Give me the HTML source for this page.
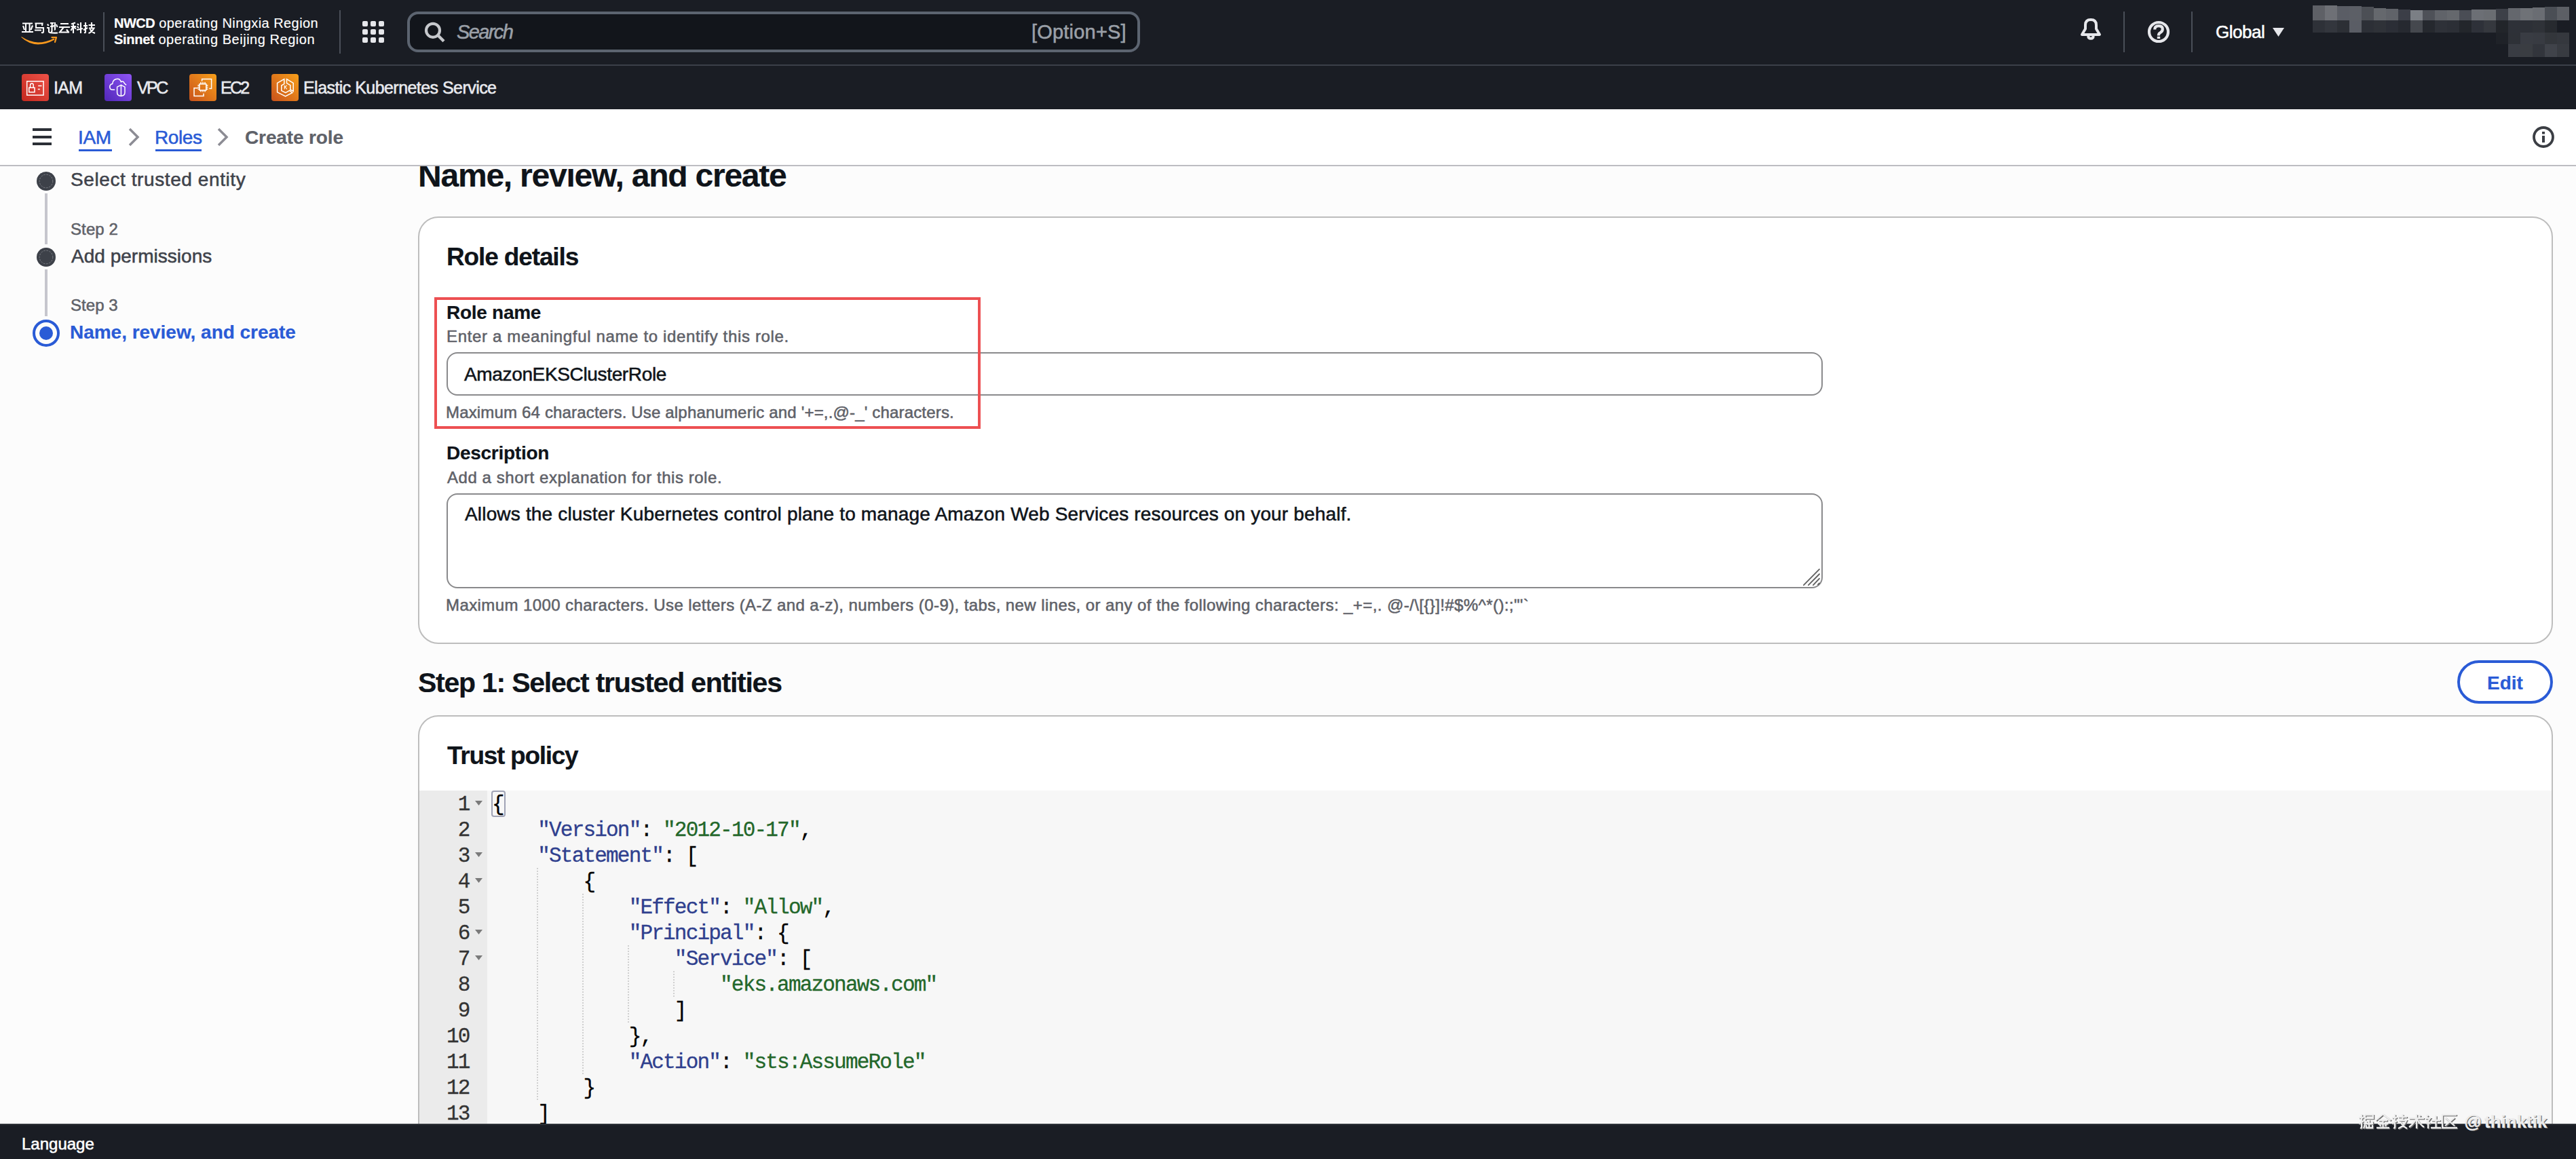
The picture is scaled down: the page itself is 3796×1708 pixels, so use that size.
<!DOCTYPE html>
<html><head><meta charset="utf-8">
<style>
*{box-sizing:border-box;margin:0;padding:0}
html,body{width:3796px;height:1708px;overflow:hidden;background:#fcfcfc;font-family:"Liberation Sans",sans-serif}
.a{position:absolute}
.t{position:absolute;white-space:pre;line-height:1;font-family:"Liberation Sans",sans-serif}
.t{-webkit-text-stroke-width:0.55px}
.b{font-weight:700;-webkit-text-stroke-width:0.2px}
.m{position:absolute;white-space:pre;line-height:1;font-family:"Liberation Mono",monospace;font-size:31px;letter-spacing:-1.8px;-webkit-text-stroke-width:0.3px}
.k{color:#2f3f8e}.s{color:#23672a}.p{color:#000}
</style></head><body>

<!-- ===== TOP NAV ===== -->
<div class="a" id="topnav" style="left:0;top:0;width:3796px;height:161px;background:#1a1d24;z-index:5">
  <!-- logo -->
  <svg class="a" style="left:28px;top:28px" width="120" height="42" viewBox="0 0 120 42">
    <g fill="none" stroke="#fff" stroke-width="2.1" stroke-linecap="butt" stroke-linejoin="miter">
      <path d="M5 6.5H20M10 7V19M15.6 7V19M6 10L8 16M20 9.5L17.5 16M4 19H21"/>
      <path d="M23.5 6.5H34.5L34 10M25 7V13H36V19Q36 20.5 33 20M23 16.5H33"/>
      <path d="M42 7.5L43.5 10M41 13H44V19Q45 21 57 20.5M46 6H50L48 9M46 11H50.5M48.5 9V18Q48.5 19 47 18.5M53 5V15Q53 16 52 15.5M51 9L50 12M55 8L56.5 12"/>
      <path d="M61 7H73M59 12H75M66 12L60 19.5H74M70 15.5L73.5 20"/>
      <path d="M77 7.5L83 5.5M76.5 11H84M80 6V21M80 11L76.5 17M81 12L84 14.5M86 7L88 9M85.5 11L88 13M85 16L94 14M91 5V21"/>
      <path d="M95 10H101M98 5V19Q98 20.5 96 20M95 16L101 13M102.5 9H112M107 5V13M103 13.5H110.5Q107.5 19 102.5 21M104.5 15Q107.5 19.5 112 21"/>
    </g>
    <path d="M3.5 26Q16 34 28 34.5Q40 34.5 51.5 28.5L52.5 30.5Q40 37.5 28 37.5Q14 37 3.5 27Z" fill="#f7981d"/>
    <path d="M48.5 27.2H55L53 34" fill="none" stroke="#f7981d" stroke-width="2.2" stroke-linejoin="round" stroke-linecap="round"/>
  </svg>
  <div class="a" style="left:152px;top:18px;width:2px;height:58px;background:#4a4f58"></div>
  <div class="t" style="left:168px;top:24px;font-size:20px;color:#fff;-webkit-text-stroke-width:0.15px;letter-spacing:0.43px"><span class="b" style="letter-spacing:-0.5px">NWCD</span> operating Ningxia Region</div>
  <div class="t" style="left:168px;top:48px;font-size:20px;color:#fff;-webkit-text-stroke-width:0.15px;letter-spacing:0.53px"><span class="b" style="letter-spacing:-0.3px">Sinnet</span> operating Beijing Region</div>
  <div class="a" style="left:500px;top:15px;width:2px;height:64px;background:#4a4f58"></div>
  <!-- grid icon -->
  <svg class="a" style="left:534px;top:31px" width="32" height="32" viewBox="0 0 32 32" fill="#e6e7eb">
    <rect x="0" y="0" width="8" height="8" rx="2"/><rect x="12" y="0" width="8" height="8" rx="2"/><rect x="24" y="0" width="8" height="8" rx="2"/>
    <rect x="0" y="12" width="8" height="8" rx="2"/><rect x="12" y="12" width="8" height="8" rx="2"/><rect x="24" y="12" width="8" height="8" rx="2"/>
    <rect x="0" y="24" width="8" height="8" rx="2"/><rect x="12" y="24" width="8" height="8" rx="2"/><rect x="24" y="24" width="8" height="8" rx="2"/>
  </svg>
  <!-- search -->
  <div class="a" style="left:600px;top:17px;width:1080px;height:60px;border:4px solid #5c6470;border-radius:16px;background:#12151b"></div>
  <svg class="a" style="left:623px;top:30px" width="34" height="34" viewBox="0 0 34 34"><circle cx="15" cy="14.8" r="10" fill="none" stroke="#c6c8cc" stroke-width="4.2"/><path d="M22 21.8L31 30.8" stroke="#c6c8cc" stroke-width="4.4"/></svg>
  <div class="t" style="left:673px;top:33px;font-size:29px;font-style:italic;color:#9ba0a8;letter-spacing:-1.6px">Search</div>
  <div class="t" style="left:1520px;top:33px;font-size:29px;color:#9ba0a8;letter-spacing:0.2px">[Option+S]</div>
  <!-- bell -->
  <svg class="a" style="left:3064px;top:26px" width="34" height="34" viewBox="0 0 34 34" fill="none" stroke="#e6e7eb" stroke-width="4" stroke-linejoin="round">
    <path d="M9 16.5V11Q9 3.1 17 3.1Q25 3.1 25 11V16.5L30 24.9H4Z"/><path d="M13.3 27Q13.3 30.8 17 30.8Q20.7 30.8 20.7 27"/>
  </svg>
  <div class="a" style="left:3129px;top:17px;width:2px;height:60px;background:#4a4f58"></div>
  <svg class="a" style="left:3163px;top:29px" width="36" height="36" viewBox="0 0 36 36" fill="none" stroke="#e6e7eb" stroke-width="4.2">
    <circle cx="18" cy="18" r="14"/><path d="M12.2 14.6Q12.2 9.2 18 9.2Q23.8 9.2 23.8 14Q23.8 17.2 20.3 19.2Q18 20.5 18 22.6V23.5"/>
    <rect x="15.8" y="24.8" width="4.4" height="3.2" fill="#e6e7eb" stroke="none"/>
  </svg>
  <div class="a" style="left:3229px;top:17px;width:2px;height:60px;background:#4a4f58"></div>
  <div class="t" style="left:3265px;top:34px;font-size:26px;color:#fff;letter-spacing:-0.47px">Global</div>
  <svg class="a" style="left:3349px;top:41px" width="17" height="13" viewBox="0 0 17 13"><path d="M0 0H17L8.5 13Z" fill="#e6e7eb"/></svg>
  <!-- mosaic -->
  <div id="mosaic">
<div class="a" style="left:3408px;top:8px;width:18px;height:22px;background:#5e6066"></div>
<div class="a" style="left:3426px;top:8px;width:18px;height:22px;background:#6e7076"></div>
<div class="a" style="left:3444px;top:9px;width:18px;height:21px;background:#5a5d65"></div>
<div class="a" style="left:3462px;top:9px;width:18px;height:21px;background:#5c5f66"></div>
<div class="a" style="left:3480px;top:10px;width:18px;height:20px;background:#4c4f55"></div>
<div class="a" style="left:3498px;top:12px;width:18px;height:18px;background:#65686d"></div>
<div class="a" style="left:3516px;top:13px;width:18px;height:17px;background:#606369"></div>
<div class="a" style="left:3534px;top:14px;width:18px;height:16px;background:#3b3e47"></div>
<div class="a" style="left:3552px;top:15px;width:18px;height:15px;background:#7b7f85"></div>
<div class="a" style="left:3570px;top:15px;width:18px;height:15px;background:#4e5158"></div>
<div class="a" style="left:3588px;top:15px;width:18px;height:15px;background:#606369"></div>
<div class="a" style="left:3606px;top:15px;width:18px;height:15px;background:#65686d"></div>
<div class="a" style="left:3624px;top:15px;width:18px;height:15px;background:#4a4d55"></div>
<div class="a" style="left:3642px;top:14px;width:18px;height:16px;background:#6c6f75"></div>
<div class="a" style="left:3660px;top:14px;width:18px;height:16px;background:#6a6d72"></div>
<div class="a" style="left:3678px;top:13px;width:18px;height:17px;background:#3d4048"></div>
<div class="a" style="left:3696px;top:12px;width:18px;height:18px;background:#64676d"></div>
<div class="a" style="left:3714px;top:12px;width:18px;height:18px;background:#6f7277"></div>
<div class="a" style="left:3732px;top:11px;width:18px;height:19px;background:#6a6d73"></div>
<div class="a" style="left:3750px;top:10px;width:18px;height:20px;background:#4a4e55"></div>
<div class="a" style="left:3768px;top:10px;width:18px;height:20px;background:#5c5f65"></div>
<div class="a" style="left:3408px;top:30px;width:18px;height:18px;background:#2e3138"></div>
<div class="a" style="left:3426px;top:30px;width:18px;height:18px;background:#33363d"></div>
<div class="a" style="left:3444px;top:30px;width:18px;height:18px;background:#2c2f35"></div>
<div class="a" style="left:3462px;top:30px;width:18px;height:18px;background:#5a5d65"></div>
<div class="a" style="left:3480px;top:30px;width:18px;height:18px;background:#2c2f36"></div>
<div class="a" style="left:3498px;top:30px;width:18px;height:18px;background:#2f3238"></div>
<div class="a" style="left:3516px;top:30px;width:18px;height:18px;background:#2b2e36"></div>
<div class="a" style="left:3534px;top:30px;width:18px;height:18px;background:#262930"></div>
<div class="a" style="left:3552px;top:30px;width:18px;height:18px;background:#45484e"></div>
<div class="a" style="left:3570px;top:30px;width:18px;height:18px;background:#25282e"></div>
<div class="a" style="left:3588px;top:30px;width:18px;height:18px;background:#2e3138"></div>
<div class="a" style="left:3606px;top:30px;width:18px;height:18px;background:#2c2f36"></div>
<div class="a" style="left:3624px;top:30px;width:18px;height:18px;background:#23262b"></div>
<div class="a" style="left:3642px;top:30px;width:18px;height:18px;background:#2e3139"></div>
<div class="a" style="left:3660px;top:30px;width:18px;height:18px;background:#35383e"></div>
<div class="a" style="left:3678px;top:30px;width:18px;height:18px;background:#22252a"></div>
<div class="a" style="left:3696px;top:30px;width:18px;height:18px;background:#2e3138"></div>
<div class="a" style="left:3714px;top:30px;width:18px;height:18px;background:#2d3037"></div>
<div class="a" style="left:3732px;top:30px;width:18px;height:18px;background:#2f3238"></div>
<div class="a" style="left:3750px;top:30px;width:18px;height:18px;background:#272a2f"></div>
<div class="a" style="left:3678px;top:48px;width:18px;height:17px;background:#1f2228"></div>
<div class="a" style="left:3696px;top:48px;width:18px;height:17px;background:#2e3137"></div>
<div class="a" style="left:3714px;top:48px;width:18px;height:17px;background:#393c43"></div>
<div class="a" style="left:3732px;top:48px;width:18px;height:17px;background:#383b42"></div>
<div class="a" style="left:3750px;top:48px;width:18px;height:17px;background:#33363b"></div>
<div class="a" style="left:3768px;top:48px;width:18px;height:17px;background:#35383e"></div>

<div class="a" style="left:3696px;top:65px;width:18px;height:19px;background:#393c43"></div>
<div class="a" style="left:3714px;top:65px;width:18px;height:19px;background:#3a3d42"></div>
<div class="a" style="left:3732px;top:65px;width:18px;height:19px;background:#32353c"></div>
<div class="a" style="left:3750px;top:65px;width:18px;height:19px;background:#40434a"></div>
<div class="a" style="left:3768px;top:65px;width:18px;height:19px;background:#383b41"></div>
</div>
  <div class="a" style="left:0;top:95px;width:3796px;height:2px;background:#3b4049"></div>

  <!-- service bar -->
  <svg class="a" style="left:32px;top:109px" width="40" height="40" viewBox="0 0 40 40">
    <defs><linearGradient id="gr" x1="0" y1="1" x2="1" y2="0"><stop offset="0" stop-color="#c4291f"/><stop offset="1" stop-color="#ee5248"/></linearGradient></defs>
    <rect width="40" height="40" rx="4" fill="url(#gr)"/>
    <g fill="none" stroke="#fff" stroke-width="1.5"><rect x="7.7" y="10.8" width="24.4" height="20.4"/><rect x="10.8" y="20.2" width="8.2" height="6.6"/><path d="M12.6 20.2V16.4Q12.6 14 14.9 14Q17.2 14 17.2 16.4V20.2M24.2 17.5H29.5M23.8 22.5H26.8"/></g>
  </svg>
  <div class="t" style="left:79px;top:117px;font-size:25px;color:#e9eaee;letter-spacing:-0.73px">IAM</div>
  <svg class="a" style="left:154px;top:109px" width="40" height="40" viewBox="0 0 40 40">
    <defs><linearGradient id="gp" x1="0" y1="1" x2="1" y2="0"><stop offset="0" stop-color="#5127b8"/><stop offset="1" stop-color="#8f55f5"/></linearGradient></defs>
    <rect width="40" height="40" rx="4" fill="url(#gp)"/>
    <g fill="none" stroke="#fff" stroke-width="1.5" stroke-linejoin="round" stroke-linecap="round"><path d="M14.6 23.3H12Q7.8 23.3 7.8 19Q7.8 15 11.8 14.4Q12.5 7.2 19.2 7.2Q23 7.2 24.4 11.8Q25.5 10.6 27 11Q28.5 11.5 29.5 14L31.6 15.9"/><path d="M18.6 19.2L24.4 16.3L30 19.2V27Q30 32.4 24.3 32.4Q18.6 32.4 18.6 27Z"/><path d="M24.4 16.3V32.4"/></g>
  </svg>
  <div class="t" style="left:202px;top:117px;font-size:25px;color:#e9eaee;letter-spacing:-2.6px">VPC</div>
  <svg class="a" style="left:279px;top:109px" width="40" height="40" viewBox="0 0 40 40">
    <defs><linearGradient id="go" x1="0" y1="1" x2="1" y2="0"><stop offset="0" stop-color="#c8511b"/><stop offset="1" stop-color="#f8a01a"/></linearGradient></defs>
    <rect width="40" height="40" rx="4" fill="url(#go)"/>
    <g fill="none" stroke="#fff" stroke-width="1.5"><path d="M18.6 10.8V7.4H32.6V21.5H29.2"/><path d="M12.5 20.8H7V32.6H21V28.8"/><rect x="15" y="14.8" width="9.8" height="9.2"/><path d="M17 12V14.8M20 12V14.8M23 12V14.8M17 24V26.6M20 24V26.6M23 24V26.6M12.4 16.8H15M12.4 19.5H15M12.4 22.2H15M24.8 16.8H27.4M24.8 19.5H27.4M24.8 22.2H27.4"/></g>
  </svg>
  <div class="t" style="left:325px;top:117px;font-size:25px;color:#e9eaee;letter-spacing:-2.7px">EC2</div>
  <svg class="a" style="left:400px;top:109px" width="40" height="40" viewBox="0 0 40 40">
    <rect width="40" height="40" rx="4" fill="url(#go)"/>
    <g fill="none" stroke="#fff" stroke-width="1.5" stroke-linejoin="miter"><path d="M18.8 7.6V14.6L14.8 17V24.6L20.8 27.6L26.6 24.4L30.8 27.6L20.6 32.9L8.6 26.8V13.4Z"/><path d="M22.5 7.6V13.6L27.9 16.6V23.2L32.2 25.4V13.4Z"/><path d="M19.3 16.7V22.5M19.3 20.2L22.6 16.7M20.4 19.2L22.8 22.5" stroke-width="1.1"/></g>
  </svg>
  <div class="t" style="left:447px;top:117px;font-size:25px;color:#e9eaee;letter-spacing:-0.55px">Elastic Kubernetes Service</div>
</div>

<!-- ===== BREADCRUMB BAR ===== -->
<div class="a" style="left:0;top:161px;width:3796px;height:82px;background:#fff;z-index:4"></div>
<div class="a" style="left:0;top:243px;width:3796px;height:2px;background:#bdbdc2;z-index:4"></div>
<div id="bc" style="position:absolute;left:0;top:0;z-index:6">
  <div class="a" style="left:48px;top:189px;width:28px;height:4px;background:#2b2f36"></div>
  <div class="a" style="left:48px;top:200px;width:28px;height:4px;background:#2b2f36"></div>
  <div class="a" style="left:48px;top:210px;width:28px;height:4px;background:#2b2f36"></div>
  <div class="t" style="left:115px;top:189px;font-size:28px;color:#2a5bd6;letter-spacing:-0.4px">IAM</div>
  <div class="a" style="left:116px;top:220px;width:49px;height:3px;background:#2a5bd6"></div>
  <svg class="a" style="left:188px;top:188px" width="20" height="28" viewBox="0 0 20 28"><path d="M3 2L15 14L3 26" fill="none" stroke="#8c8c94" stroke-width="3.5"/></svg>
  <div class="t" style="left:228px;top:189px;font-size:28px;color:#2a5bd6;letter-spacing:-0.4px">Roles</div>
  <div class="a" style="left:229px;top:220px;width:68px;height:3px;background:#2a5bd6"></div>
  <svg class="a" style="left:319px;top:188px" width="20" height="28" viewBox="0 0 20 28"><path d="M3 2L15 14L3 26" fill="none" stroke="#8c8c94" stroke-width="3.5"/></svg>
  <div class="t b" style="left:361px;top:189px;font-size:28px;color:#5f6269;letter-spacing:-0.12px">Create role</div>
  <svg class="a" style="left:3730px;top:184px" width="36" height="36" viewBox="0 0 36 36"><circle cx="18" cy="18" r="14" fill="none" stroke="#3b3e44" stroke-width="3.8"/><rect x="16" y="10" width="4" height="3.6" fill="#3b3e44"/><rect x="16" y="16" width="4" height="10" fill="#3b3e44"/></svg>
</div>

<!-- ===== SIDE NAV ===== -->
<svg class="a" style="left:54px;top:253px" width="28" height="28" viewBox="0 0 28 28"><circle cx="14" cy="14" r="14" fill="#3d4149"/><circle cx="14" cy="14" r="9.8" fill="none" stroke="#7a7d84" stroke-width="1" stroke-dasharray="2.6 1.6"/></svg>
<div class="a" style="left:66px;top:285px;width:4px;height:75px;background:#c6c6cd"></div>
<div class="t" style="left:104px;top:251px;font-size:28px;color:#3f434b;letter-spacing:0.59px">Select trusted entity</div>
<div class="t" style="left:104px;top:326px;font-size:24px;color:#5f6269;letter-spacing:0.1px">Step 2</div>
<svg class="a" style="left:54px;top:365px" width="28" height="28" viewBox="0 0 28 28"><circle cx="14" cy="14" r="14" fill="#3d4149"/><circle cx="14" cy="14" r="9.8" fill="none" stroke="#7a7d84" stroke-width="1" stroke-dasharray="2.6 1.6"/></svg>
<div class="t" style="left:105px;top:364px;font-size:28px;color:#3f434b;letter-spacing:0.02px">Add permissions</div>
<div class="a" style="left:66px;top:397px;width:4px;height:69px;background:#c6c6cd"></div>
<div class="t" style="left:104px;top:438px;font-size:24px;color:#5f6269;letter-spacing:0.05px">Step 3</div>
<div class="a" style="left:48px;top:471px;width:40px;height:40px;border-radius:50%;border:4px solid #2a5bd6"></div>
<div class="a" style="left:58px;top:481px;width:20px;height:20px;border-radius:50%;background:#2a5bd6"></div>
<div class="t b" style="left:103px;top:476px;font-size:28px;color:#2a5bd6;letter-spacing:-0.03px">Name, review, and create</div>

<!-- ===== MAIN ===== -->
<div class="t b" style="left:616px;top:235px;font-size:48px;color:#0f141a;letter-spacing:-1.22px;z-index:1">Name, review, and create</div>

<div class="a" style="left:616px;top:319px;width:3146px;height:630px;border:2px solid #bdbdbd;border-radius:30px;background:#fff"></div>
<div class="t b" style="left:658px;top:360px;font-size:37px;color:#0f141a;letter-spacing:-1.13px">Role details</div>
<div class="t b" style="left:658px;top:447px;font-size:28px;color:#0f141a;letter-spacing:-0.28px">Role name</div>
<div class="t" style="left:658px;top:484px;font-size:24px;color:#5f6269;letter-spacing:0.65px">Enter a meaningful name to identify this role.</div>
<div class="a" style="left:658px;top:519px;width:2028px;height:64px;border:2px solid #8a8a8c;border-radius:16px;background:#fff"></div>
<div class="t" style="left:684px;top:538px;font-size:28px;color:#0f141a;letter-spacing:-0.35px">AmazonEKSClusterRole</div>
<div class="t" style="left:657px;top:596px;font-size:24px;color:#5f6269;letter-spacing:0.17px">Maximum 64 characters. Use alphanumeric and '+=,.@-_' characters.</div>
<div class="a" style="left:640px;top:438px;width:805px;height:194px;border:4px solid #ed5052"></div>

<div class="t b" style="left:658px;top:654px;font-size:28px;color:#0f141a;letter-spacing:-0.27px">Description</div>
<div class="t" style="left:659px;top:692px;font-size:24px;color:#5f6269;letter-spacing:0.55px">Add a short explanation for this role.</div>
<div class="a" style="left:658px;top:727px;width:2028px;height:140px;border:2px solid #8a8a8c;border-radius:16px;background:#fff"></div>
<svg class="a" style="left:2655px;top:835px" width="30" height="30" viewBox="0 0 30 30"><path d="M3 27.2L26 3.9M10 27.2L26 11M17 27.2L26 17.6M24 26.5L26 24.5" stroke="#626262" stroke-width="1.9" stroke-linecap="round"/></svg>
<div class="t" style="left:685px;top:744px;font-size:28px;color:#0f141a;letter-spacing:0.17px">Allows the cluster Kubernetes control plane to manage Amazon Web Services resources on your behalf.</div>
<div class="t" style="left:657px;top:880px;font-size:24px;color:#5f6269;letter-spacing:0.41px">Maximum 1000 characters. Use letters (A-Z and a-z), numbers (0-9), tabs, new lines, or any of the following characters: _+=,. @-/\[{}]!#$%^*():;"'`</div>

<div class="t b" style="left:616px;top:986px;font-size:41px;color:#0f141a;letter-spacing:-1.24px">Step 1: Select trusted entities</div>
<div class="a" style="left:3621px;top:973px;width:141px;height:64px;border:4px solid #2a5bd6;border-radius:32px;background:#fff"></div>
<div class="t b" style="left:3665px;top:993px;font-size:28px;color:#2a5bd6;letter-spacing:0px">Edit</div>

<div class="a" style="left:616px;top:1054px;width:3146px;height:700px;border:2px solid #bdbdbd;border-radius:30px;background:#fff"></div>
<div class="t b" style="left:659px;top:1095px;font-size:37px;color:#0f141a;letter-spacing:-1.28px">Trust policy</div>
<div class="a" style="left:618px;top:1165px;width:3142px;height:500px;background:#f7f7f7"></div>
<div class="a" style="left:618px;top:1165px;width:100px;height:500px;background:#ebebeb"></div>
<div id="code">
<div class="m" style="left:725px;top:1170.4px;color:#000">{</div>
<div class="m" style="left:674.7px;top:1170.4px;color:#333">1</div>
<svg class="a" style="left:700px;top:1180px" width="11" height="8" viewBox="0 0 11 8"><path d="M0 0H11L5.5 7Z" fill="#7a7a7a"/></svg>
<div class="m" style="left:725px;top:1208.4px;color:#000">    <span class="k">"Version"</span>: <span class="s">"2012-10-17"</span>,</div>
<div class="m" style="left:674.7px;top:1208.4px;color:#333">2</div>
<div class="m" style="left:725px;top:1246.4px;color:#000">    <span class="k">"Statement"</span>: [</div>
<div class="m" style="left:674.7px;top:1246.4px;color:#333">3</div>
<svg class="a" style="left:700px;top:1256px" width="11" height="8" viewBox="0 0 11 8"><path d="M0 0H11L5.5 7Z" fill="#7a7a7a"/></svg>
<div class="m" style="left:725px;top:1284.4px;color:#000">        {</div>
<div class="m" style="left:674.7px;top:1284.4px;color:#333">4</div>
<svg class="a" style="left:700px;top:1294px" width="11" height="8" viewBox="0 0 11 8"><path d="M0 0H11L5.5 7Z" fill="#7a7a7a"/></svg>
<div class="m" style="left:725px;top:1322.4px;color:#000">            <span class="k">"Effect"</span>: <span class="s">"Allow"</span>,</div>
<div class="m" style="left:674.7px;top:1322.4px;color:#333">5</div>
<div class="m" style="left:725px;top:1360.4px;color:#000">            <span class="k">"Principal"</span>: {</div>
<div class="m" style="left:674.7px;top:1360.4px;color:#333">6</div>
<svg class="a" style="left:700px;top:1370px" width="11" height="8" viewBox="0 0 11 8"><path d="M0 0H11L5.5 7Z" fill="#7a7a7a"/></svg>
<div class="m" style="left:725px;top:1398.4px;color:#000">                <span class="k">"Service"</span>: [</div>
<div class="m" style="left:674.7px;top:1398.4px;color:#333">7</div>
<svg class="a" style="left:700px;top:1408px" width="11" height="8" viewBox="0 0 11 8"><path d="M0 0H11L5.5 7Z" fill="#7a7a7a"/></svg>
<div class="m" style="left:725px;top:1436.4px;color:#000">                    <span class="s">"eks.amazonaws.com"</span></div>
<div class="m" style="left:674.7px;top:1436.4px;color:#333">8</div>
<div class="m" style="left:725px;top:1474.4px;color:#000">                ]</div>
<div class="m" style="left:674.7px;top:1474.4px;color:#333">9</div>
<div class="m" style="left:725px;top:1512.4px;color:#000">            },</div>
<div class="m" style="left:657.9px;top:1512.4px;color:#333">10</div>
<div class="m" style="left:725px;top:1550.4px;color:#000">            <span class="k">"Action"</span>: <span class="s">"sts:AssumeRole"</span></div>
<div class="m" style="left:657.9px;top:1550.4px;color:#333">11</div>
<div class="m" style="left:725px;top:1588.4px;color:#000">        }</div>
<div class="m" style="left:657.9px;top:1588.4px;color:#333">12</div>
<div class="m" style="left:725px;top:1626.4px;color:#000">    ]</div>
<div class="m" style="left:657.9px;top:1626.4px;color:#333">13</div>
<div class="a" style="left:791px;top:1279px;width:2px;height:342px;background:repeating-linear-gradient(#d0d0d0 0 2px,transparent 2px 4px)"></div>
<div class="a" style="left:858px;top:1317px;width:2px;height:266px;background:repeating-linear-gradient(#d0d0d0 0 2px,transparent 2px 4px)"></div>
<div class="a" style="left:925px;top:1393px;width:2px;height:114px;background:repeating-linear-gradient(#d0d0d0 0 2px,transparent 2px 4px)"></div>
<div class="a" style="left:992px;top:1431px;width:2px;height:38px;background:repeating-linear-gradient(#d0d0d0 0 2px,transparent 2px 4px)"></div>
<div class="a" style="left:724px;top:1165px;width:21px;height:39px;border:2px solid #a0a3b5;border-radius:4px"></div>
</div>
<!-- CODEEND -->

<!-- ===== FOOTER ===== -->
<div class="a" style="left:0;top:1656px;width:3796px;height:52px;background:#1a1d24;z-index:5"></div>
<div class="a" style="left:0;top:1656px;width:3796px;height:2px;background:#2e3238;z-index:5"></div>
<div class="t" style="left:32px;top:1674px;font-size:24px;color:#fff;letter-spacing:0px;z-index:6">Language</div>
<!-- watermark -->
<svg class="a" style="left:3475px;top:1640px;z-index:7;overflow:visible" width="152" height="26" viewBox="0 0 152 26">
  <g fill="none" stroke-width="2.3" stroke-linecap="butt">
  <g stroke="#6a6a6a" transform="translate(1.2,1.2)">
    <path d="M1 7H8M5 2V21Q5 23 3 22M1 16L8 12M10 3H22V8H10M10 3V11Q10 19 8 23M16 10V22M12 12V16H21V12M12 18V22H21V18"/>
    <path d="M36.5 2L26 11M36.5 2L48 11M30 11H43M29 16H44M36.5 11V22M32 17L33 20M41 17L40 20M27 22H46"/>
    <path d="M50 7H57M54 2V21Q54 23 52 22M50 16L57 12M59 6H72M65.5 2V11M60 11H71Q68 19 59 23M62 13Q66 20 72 23"/>
    <path d="M75 8H97M86 2V23M86 8Q81 17 75 21M86 8Q91 17 97 21M90 3L92 5"/>
    <path d="M101 3L103 5M99 8H106L100 16M103 12V23M103 13L106 16M108 11H121M114.5 4V22M107 22H122"/>
    <path d="M145 3H124V22H146M128 7L142 19M142 7L128 19"/>
  </g>
  <g stroke="#ededed">
    <path d="M1 7H8M5 2V21Q5 23 3 22M1 16L8 12M10 3H22V8H10M10 3V11Q10 19 8 23M16 10V22M12 12V16H21V12M12 18V22H21V18"/>
    <path d="M36.5 2L26 11M36.5 2L48 11M30 11H43M29 16H44M36.5 11V22M32 17L33 20M41 17L40 20M27 22H46"/>
    <path d="M50 7H57M54 2V21Q54 23 52 22M50 16L57 12M59 6H72M65.5 2V11M60 11H71Q68 19 59 23M62 13Q66 20 72 23"/>
    <path d="M75 8H97M86 2V23M86 8Q81 17 75 21M86 8Q91 17 97 21M90 3L92 5"/>
    <path d="M101 3L103 5M99 8H106L100 16M103 12V23M103 13L106 16M108 11H121M114.5 4V22M107 22H122"/>
    <path d="M145 3H124V22H146M128 7L142 19M142 7L128 19"/>
  </g>
  </g>
</svg>
<div class="t" style="left:3631px;top:1640px;font-size:26px;color:#ececec;text-shadow:1.2px 1.2px 0 #666;z-index:7">@</div>
<div class="t b" style="left:3661px;top:1640px;font-size:26px;color:#ececec;text-shadow:1.2px 1.2px 0 #666;z-index:7">thinktik</div>
</body></html>
